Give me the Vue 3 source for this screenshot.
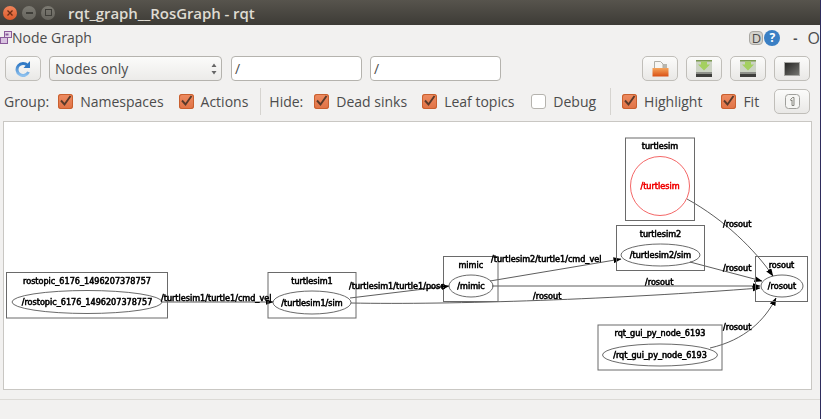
<template>
  <div class="window">
    <div class="titlebar">
      <div class="win-btn close"><svg width="8" height="8" viewBox="0 0 8 8"><path d="M1.5 1.5l5 5M6.5 1.5l-5 5" stroke="#6b2c14" stroke-width="1.3" /></svg></div>
      <div class="win-btn"><span class="min"></span></div>
      <div class="win-btn"><span class="max"></span></div>
      <span class="title">rqt_graph__RosGraph - rqt</span>
    </div>

    <div class="dock">
      <svg class="dock-icon" width="12" height="15" viewBox="0 0 12 15">
        <rect x="4.5" y="1.5" width="7" height="6" fill="#e6d8ea" stroke="#8a5a9a" />
        <rect x="0.5" y="7.5" width="7" height="6" fill="#d9c3e0" stroke="#8a5a9a" />
        <rect x="5.5" y="3.5" width="3" height="2" fill="#8a5a9a" />
      </svg>
      <span class="dock-title">Node Graph</span>
      <span class="dock-d">D</span>
      <span class="dock-help">?</span>
      <span class="dock-dash">-</span>
      <span class="dock-o">O</span>
    </div>

    <div class="row row-top">
      <button class="btn">
        <svg width="16" height="16" viewBox="0 0 16 16">
          <defs>
            <linearGradient id="refresh" x1="0" y1="0" x2="0" y2="1">
              <stop offset="0" stop-color="#2f78c4" />
              <stop offset="1" stop-color="#8cc0ee" />
            </linearGradient>
          </defs>
          <path d="M12.5 4.5A6 6 0 1 0 13.5 11" fill="none" stroke="url(#refresh)" stroke-width="3" />
          <path d="M15 0v7H8.500z" fill="#2f78c4" />
        </svg>
      </button>
      <div class="combo">
        <span>Nodes only</span>
        <svg width="8" height="14" viewBox="0 0 8 14"><path d="M4 1.500l2.500 3.500h-5zM4 12.500l2.500-3.500h-5z" fill="#666" /></svg>
      </div>
      <div class="input">/</div>
      <div class="input">/</div>
      <div class="spacer"></div>
      <button class="btn">
        <svg width="17" height="16" viewBox="0 0 17 16">
          <defs>
            <linearGradient id="folder" x1="0" y1="0" x2="0" y2="1">
              <stop offset="0" stop-color="#f5a55c" />
              <stop offset="1" stop-color="#d94f14" />
            </linearGradient>
          </defs>
          <path d="M10 3h5v4h-5z" fill="#b8b6ae" />
          <path d="M2.500 0.500h6l2.500 2.500v5h-8.500z" fill="#f6f5f2" stroke="#b0aea6" />
          <path d="M0.500 7h16v8.500h-16z" fill="url(#folder)" />
        </svg>
      </button>
      <button class="btn" v-for="n in 2" :key="n">
        <svg width="16" height="17" viewBox="0 0 16 17">
          <rect x="0" y="0" width="16" height="17" rx="1" fill="#ccd3c4" />
          <rect x="0" y="0" width="16" height="1.500" fill="#7c9a52" />
          <rect x="0" y="12" width="16" height="2" fill="#8e908a" />
          <rect x="0" y="14" width="16" height="3" fill="#3e3e3c" />
          <path d="M5 1.500h6v3h3l-6 6-6-6h3z" fill="#a4d060" />
        </svg>
      </button>
      <button class="btn">
        <svg width="16" height="14" viewBox="0 0 16 14">
          <defs>
            <linearGradient id="screen" x1="0" y1="0" x2="1" y2="1">
              <stop offset="0" stop-color="#232321" />
              <stop offset="1" stop-color="#777773" />
            </linearGradient>
          </defs>
          <rect x="0.500" y="0.500" width="15" height="13" fill="url(#screen)" stroke="#a8a8a4" />
        </svg>
      </button>
    </div>

    <div class="row row-opts">
      <span class="label lead">Group:</span>
      <label v-for="o in groupOpts" :key="o.text" class="opt" :class="o.cls">
        <span class="check" :class="{ on: o.on }">
          <svg v-if="o.on" width="15" height="15" viewBox="0 0 15 15"><path d="M3 6.500l3.500 4L12.500 2" fill="none" stroke="#5a3a2a" stroke-width="1.900" /></svg>
        </span>
        <span class="label">{{ o.text }}</span>
      </label>
      <span class="sep sep-a"></span>
      <span class="label hide">Hide:</span>
      <label v-for="o in hideOpts" :key="o.text" class="opt" :class="o.cls">
        <span class="check" :class="{ on: o.on }">
          <svg v-if="o.on" width="15" height="15" viewBox="0 0 15 15"><path d="M3 6.500l3.500 4L12.500 2" fill="none" stroke="#5a3a2a" stroke-width="1.900" /></svg>
        </span>
        <span class="label">{{ o.text }}</span>
      </label>
      <span class="sep sep-b"></span>
      <label v-for="o in viewOpts" :key="o.text" class="opt" :class="o.cls">
        <span class="check" :class="{ on: o.on }">
          <svg v-if="o.on" width="15" height="15" viewBox="0 0 15 15"><path d="M3 6.500l3.500 4L12.500 2" fill="none" stroke="#5a3a2a" stroke-width="1.900" /></svg>
        </span>
        <span class="label">{{ o.text }}</span>
      </label>
      <div class="spacer"></div>
      <button class="btn">
        <svg width="15" height="15" viewBox="0 0 15 15">
          <rect x="0.500" y="0.500" width="14" height="14" rx="3" fill="#f6f6f4" stroke="#a0a09c" />
          <path d="M5.500 5.500l2-2h1.500v8h-2v-5.500l-1 .8z" fill="#ececE8" stroke="#6e6e68" stroke-width="0.800" />
        </svg>
      </button>
    </div>

    <div class="canvas">
      <svg class="graph" width="806" height="267" viewBox="4 122 806 267">
        <defs>
          <marker id="arr" markerWidth="8" markerHeight="6" refX="7.500" refY="3" orient="auto" markerUnits="userSpaceOnUse">
            <path d="M0 0L8 3L0 6z" fill="#000" />
          </marker>
        </defs>
        <path v-for="(d, i) in edges" :key="i" :d="d" class="edge" marker-end="url(#arr)" />
        <g v-for="n in nodes" :key="n.title">
          <rect :x="n.x" :y="n.y" :width="n.w" :height="n.h" class="box" />
          <text :x="n.x + n.w / 2" :y="n.y + 11" class="txt">{{ n.title }}</text>
          <ellipse :cx="n.cx" :cy="n.cy" :rx="n.rx" :ry="n.ry" class="ell" :class="{ red: n.red }" />
          <text :x="n.cx" :y="n.cy + 3" class="txt" :class="{ redtxt: n.red }">{{ n.name }}</text>
        </g>
        <text v-for="l in labels" :key="l.t + l.x + l.y" :x="l.x" :y="l.y" class="txt start">{{ l.t }}</text>
      </svg>
    </div>
    <div class="footer"></div>
  </div>
</template>

<script setup>
const groupOpts = [
  { text: 'Namespaces', on: true, cls: 'o-ns' },
  { text: 'Actions', on: true, cls: 'o-act' }
]
const hideOpts = [
  { text: 'Dead sinks', on: true, cls: 'o-dead' },
  { text: 'Leaf topics', on: true, cls: 'o-leaf' },
  { text: 'Debug', on: false, cls: 'o-debug' }
]
const viewOpts = [
  { text: 'Highlight', on: true, cls: 'o-high' },
  { text: 'Fit', on: true, cls: 'o-fit' }
]

const nodes = [
  { title: 'rostopic_6176_1496207378757', name: '/rostopic_6176_1496207378757', x: 6.5, y: 272.5, w: 161, h: 45.5, cx: 87, cy: 302, rx: 75, ry: 11.5 },
  { title: 'turtlesim1', name: '/turtlesim1/sim', x: 268, y: 272.5, w: 88, h: 45.5, cx: 312, cy: 302.5, rx: 39, ry: 11.5 },
  { title: 'mimic', name: '/mimic', x: 443.5, y: 256.5, w: 54.5, h: 45, cx: 471, cy: 286, rx: 22, ry: 11 },
  { title: 'turtlesim', name: '/turtlesim', x: 625.5, y: 138, w: 69, h: 82.5, cx: 660, cy: 186, rx: 29.5, ry: 29.5, red: true },
  { title: 'turtlesim2', name: '/turtlesim2/sim', x: 616.5, y: 225.5, w: 88, h: 45, cx: 660.5, cy: 255, rx: 39.5, ry: 11 },
  { title: 'rosout', name: '/rosout', x: 755.5, y: 256.5, w: 52, h: 45, cx: 782, cy: 286, rx: 21, ry: 11 },
  { title: 'rqt_gui_py_node_6193', name: '/rqt_gui_py_node_6193', x: 598, y: 325, w: 124, h: 45, cx: 660, cy: 355, rx: 57.5, ry: 11 }
]

const edges = [
  'M162 302L273 302',
  'M350 298L449 286',
  'M490 281L621 259',
  'M492 286L760 286',
  'M351 303C450 305 620 299 760 288',
  'M687 199C725 220 755 250 773 276',
  'M690 262L762 281',
  'M710 348C745 340 765 320 776 298'
]

const labels = [
  { t: '/turtlesim1/turtle1/cmd_vel', x: 161, y: 301 },
  { t: '/turtlesim1/turtle1/pose', x: 349, y: 289 },
  { t: '/turtlesim2/turtle1/cmd_vel', x: 491, y: 262 },
  { t: '/rosout', x: 533, y: 299 },
  { t: '/rosout', x: 645, y: 285 },
  { t: '/rosout', x: 723, y: 227 },
  { t: '/rosout', x: 723, y: 271 },
  { t: '/rosout', x: 723, y: 330 }
]
</script>

<style>
html, body {
  margin: 0;
  padding: 0;
  background: #f2f1f0;
}
</style>

<style scoped>
.window {
  width: 821px;
  height: 419px;
  box-sizing: border-box;
  overflow: hidden;
  background: #f2f1f0;
  border-right: 1px solid #2e2c5c;
  font-family: "Open Sans", "Noto Sans", sans-serif;
  color: #4c4c4c;
  display: flex;
  flex-direction: column;
}
.titlebar {
  height: 25px;
  flex: none;
  display: flex;
  align-items: center;
  padding-left: 3px;
  gap: 5px;
  background: linear-gradient(#57544d, #3d3b36);
}
.win-btn {
  width: 14px;
  height: 14px;
  border-radius: 50%;
  background: linear-gradient(#7c7a72, #66645d);
  display: flex;
  align-items: center;
  justify-content: center;
}
.win-btn.close {
  background: linear-gradient(#f0845a, #dc5a2c);
}
.min {
  width: 7px;
  height: 2px;
  background: #3f3e39;
}
.max {
  width: 5px;
  height: 5px;
  border: 1.5px solid #3f3e39;
}
.title {
  margin-left: 8px;
  color: #dfdbd2;
  font-size: 15px;
  font-weight: 600;
  letter-spacing: -0.08px;
}
.dock {
  height: 25px;
  flex: none;
  display: flex;
  align-items: center;
  font-size: 14px;
}
.dock-icon {
  flex: none;
}
.dock-d {
  margin-left: auto;
  width: 12px;
  height: 12px;
  line-height: 12px;
  text-align: center;
  border-radius: 4px;
  background: #d4d2cd;
  border: 1px solid #aaa8a3;
  font-size: 13px;
}
.dock-help {
  margin-left: 1px;
  width: 16px;
  height: 16px;
  line-height: 16px;
  border-radius: 50%;
  text-align: center;
  background: #3a7fc4;
  color: #fff;
  font-size: 12px;
  font-weight: 700;
}
.dock-dash {
  margin-left: 13px;
  font-weight: 700;
  font-size: 13px;
}
.dock-o {
  margin-left: 10px;
  font-size: 16px;
}
.row {
  display: flex;
  align-items: center;
  flex: none;
  padding: 0 10px 0 5px;
  height: 25px;
}
.row-top {
  margin-top: 6px;
}
.row-opts {
  margin-top: 8px;
  padding-left: 4px;
}
.spacer {
  flex: 1;
}
.btn {
  width: 36px;
  height: 25px;
  flex: none;
  padding: 0;
  margin-left: 8px;
  display: flex;
  align-items: center;
  justify-content: center;
  border: 1px solid #c0beb9;
  border-radius: 5px;
  background: linear-gradient(#fbfbfa, #e9e8e6);
}
.row-top .btn:first-child {
  margin-left: 0;
}
.combo {
  width: 173px;
  height: 25px;
  box-sizing: border-box;
  margin-left: 8px;
  padding: 0 3px 0 5px;
  display: flex;
  align-items: center;
  justify-content: space-between;
  border: 1px solid #b5b3ae;
  border-radius: 4px;
  background: linear-gradient(#fbfbfa, #ecebe9);
  font-size: 14px;
}
.input {
  width: 131px;
  height: 25px;
  box-sizing: border-box;
  margin-left: 9px;
  padding-left: 3px;
  line-height: 23px;
  border: 1px solid #b5b3ae;
  border-radius: 4px;
  background: #fff;
  font-size: 14px;
}
.input + .input {
  margin-left: 8px;
}
.label {
  font-size: 14px;
  white-space: nowrap;
}
.opt {
  display: flex;
  align-items: center;
  gap: 7px;
}
.check {
  width: 15px;
  height: 15px;
  box-sizing: border-box;
  flex: none;
  border-radius: 3px;
  border: 1px solid #b5b3ae;
  background: #fff;
}
.check.on {
  border: none;
  background: linear-gradient(#ee8c62, #e07245);
  box-shadow: inset 0 0 0 1px #c9602f;
}
.check svg {
  display: block;
}
.o-ns { margin-left: 9px; }
.o-act { margin-left: 15px; }
.sep {
  width: 1px;
  height: 27px;
  background: #d6d4d0;
  flex: none;
}
.sep-a { margin-left: 12px; }
.hide { margin-left: 8px; }
.o-dead { margin-left: 11px; }
.o-leaf { margin-left: 15px; }
.o-debug { margin-left: 17px; }
.sep-b { margin-left: 14px; }
.o-high { margin-left: 11px; }
.o-fit { margin-left: 19px; }
.canvas {
  margin: 8px 9px 0 4px;
  height: 267px;
  flex: none;
  background: #fff;
  outline: 1px solid #c9c7c3;
}
.graph {
  display: block;
  filter: blur(0.25px);
}
.edge {
  fill: none;
  stroke: #333;
  stroke-width: 0.8;
}
.box {
  fill: none;
  stroke: #6a6a6a;
  stroke-width: 1;
}
.ell {
  fill: none;
  stroke: #444;
  stroke-width: 0.8;
}
.ell.red {
  stroke: #f04040;
}
.txt {
  font-family: "DejaVu Sans", sans-serif;
  font-size: 8.1px;
  stroke: #000;
  stroke-width: 0.55px;
  fill: #000;
  text-anchor: middle;
}
.txt.start {
  text-anchor: start;
}
.txt.redtxt {
  fill: #f00000;
  stroke: #f00000;
}
.footer {
  margin-top: 10px;
  flex: 1;
  border-top: 1px solid #dcdad6;
}
</style>
